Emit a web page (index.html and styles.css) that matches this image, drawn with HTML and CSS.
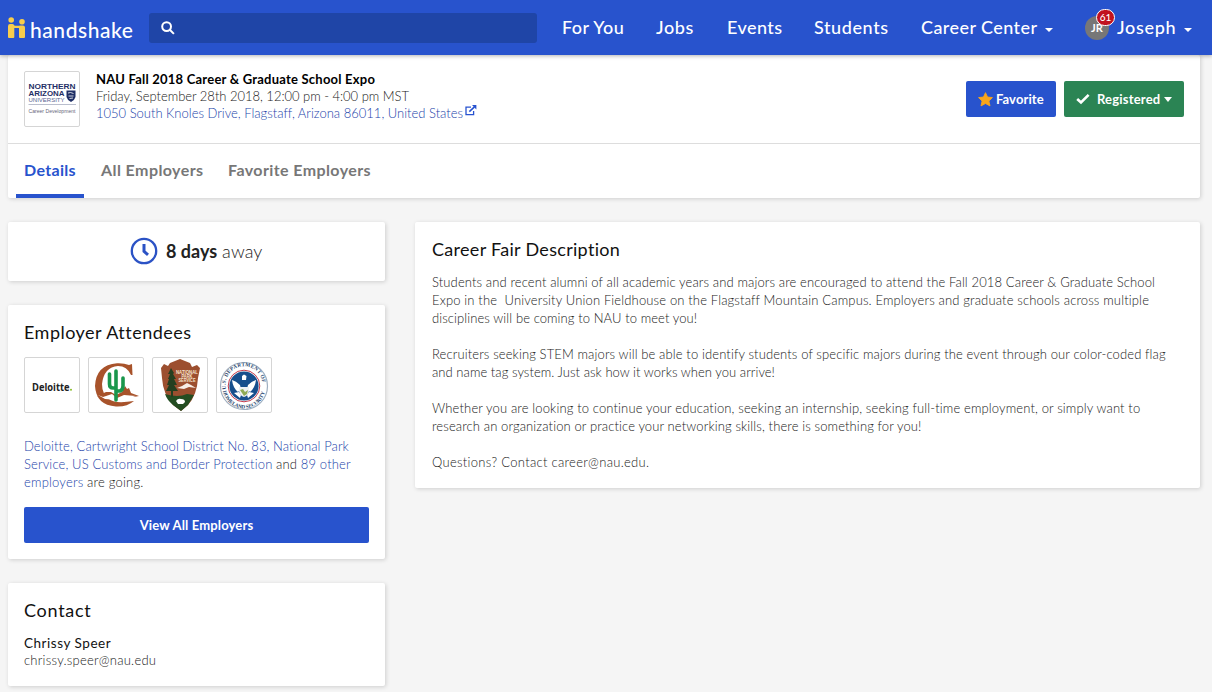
FILE: index.html
```html
<!DOCTYPE html>
<html lang="en">
<head>
<meta charset="utf-8">
<title>NAU Fall 2018 Career &amp; Graduate School Expo</title>
<link rel="stylesheet" href="styles.css">
</head>
<body>
<header class="topbar">
  <div class="brand">
    <svg class="brand-mark" width="18" height="22" viewBox="0 0 18 22" fill="#f8cd4c">
      <circle cx="3.2" cy="3" r="2.8"/><circle cx="14" cy="4.8" r="2.8"/>
      <path d="M0 9.2Q0 7 2 7H4.5Q6 7 6.6 8.8H10.8Q11.5 8.6 12.5 8.6H15Q17 8.6 17 10.6V20Q17 21 16 21H12Q11 21 11 20V11H6.3V20Q6.3 21 5.3 21H1Q0 21 0 20Z"/>
    </svg>
    <span class="brand-name">handshake</span>
  </div>
  <div class="search">
    <svg width="14" height="14" viewBox="0 0 14 14" fill="none" stroke="#fff" stroke-width="2"><circle cx="5.6" cy="5.6" r="4.4"/><path d="M8.8 8.8L12.9 12.9"/></svg>
  </div>
  <nav class="nav">
    <a class="nav-you">For You</a>
    <a class="nav-jobs">Jobs</a>
    <a class="nav-events">Events</a>
    <a class="nav-students">Students</a>
    <a class="nav-center">Career Center</a><i class="caret"></i>
    <span class="avatar"><span class="initials">JR</span><span class="badge">61</span></span>
    <a class="nav-user">Joseph</a><i class="caret"></i>
  </nav>
</header>
<main class="page">
  <section class="card event">
    <div class="event-info">
      <div class="thumb">
        <svg width="54" height="54" viewBox="0 0 54 54" font-family="Liberation Sans, sans-serif" fill="#1f2f66">
          <text x="3.5" y="17" font-size="6.3" font-weight="700" textLength="47" lengthAdjust="spacingAndGlyphs">NORTHERN</text>
          <text x="3.5" y="24" font-size="6.3" font-weight="700" textLength="36" lengthAdjust="spacingAndGlyphs">ARIZONA</text>
          <text x="3.5" y="30" font-size="5.2" textLength="36" lengthAdjust="spacingAndGlyphs" fill="#5a6690">UNIVERSITY</text>
          <path d="M41.500 18.500H50.500V25Q49.500 28.500 46 30Q42.500 28.500 41.500 25Z"/>
          <path d="M43 21L45.500 20.500 48.500 21.500M43.500 24H48.500M44.500 26.500L48 26" stroke="#fff" stroke-width=".8"/>
          <path d="M3.5 32.500H51" stroke="#a7adc0" stroke-width=".8"/>
          <text x="3.5" y="40.500" font-size="5" textLength="47" lengthAdjust="spacingAndGlyphs" fill="#66677c">Career Development</text>
        </svg>
      </div>
      <div class="event-text">
        <div class="event-title">NAU Fall 2018 Career &amp; Graduate School Expo</div>
        <div class="event-date">Friday, September 28th 2018, 12:00 pm - 4:00 pm MST</div>
        <div class="event-place"><a>1050 South Knoles Drive, Flagstaff, Arizona 86011, United States</a><svg class="ext" width="12" height="11" viewBox="0 0 12 11" fill="none" stroke="#2853d0" stroke-width="1.3"><path d="M6 2.2H1V9.6H8.6V6"/><path d="M4.3 6.6L9.5 1.9" stroke-width="1.6"/><path d="M7 0H11.4V4.4Z" fill="#2853d0" stroke="none"/></svg></div>
      </div>
      <button class="btn btn-favorite"><svg width="15" height="15" viewBox="0 0 14 14" fill="#f9a51a" stroke="#f9a51a" stroke-width=".8" stroke-linejoin="round"><path d="M7 .6L8.9 4.7 13.5 5.2 10.2 8.4 11.2 13 7 10.7 2.8 13 3.8 8.4 .5 5.2 5.1 4.7Z"/></svg><span>Favorite</span></button>
      <button class="btn btn-registered"><svg width="14" height="12" viewBox="0 0 14 12" fill="none" stroke="#fff" stroke-width="2.6"><path d="M1.2 6L5 9.5 12.6 1.9"/></svg><span>Registered</span><i class="caret big"></i></button>
    </div>
    <nav class="tabs">
      <a class="tab active"><span class="t1">Details</span></a>
      <a class="tab"><span class="t2">All Employers</span></a>
      <a class="tab"><span class="t3">Favorite Employers</span></a>
    </nav>
  </section>
  <div class="columns">
    <div class="side">
      <section class="card countdown">
        <svg width="28" height="28" viewBox="0 0 28 28" fill="none" stroke="#2b52c5"><circle cx="14" cy="14" r="12.2" stroke-width="2.3"/><path d="M14 7V14.300L18 17.800" stroke-width="3"/></svg>
        <span class="days"><b>8 days</b> away</span>
      </section>
      <section class="card employers">
        <h2 class="h-emp">Employer Attendees</h2>
        <div class="logos">
          <div class="thumb"><svg width="54" height="54" viewBox="0 0 54 54"><text x="7" y="32.5" font-family="Open Sans, sans-serif" font-weight="700" font-size="10.5" textLength="37.5" lengthAdjust="spacingAndGlyphs" fill="#222">Deloitte</text><circle cx="46" cy="31.8" r="1" fill="#86bc25"/></svg></div>
          <div class="thumb"><svg width="54" height="54" viewBox="0 0 54 54">
            <path d="M43 6L43.5 17H42Q38 8 29 8Q15 9 13 26Q13 36 20 41Q25 46 45 43Q38 49 27 48.5Q7 47 6 28Q7 7 28 5.3Q35 5 40 7Z" fill="#a8532b"/>
            <path d="M8 38L17 34 22 34 27 37 33 34 36 28 38 31 40 30 42 35 50 38 45 39 34 39 27 42 20 39 13 41Z" fill="#a8532b"/>
            <path d="M9 37L14 39 23 36 28 40 35 37 47 38 38 41 28 42 16 41Z" fill="#fff"/>
            <path d="M27 42V13M27 30H24Q20.5 30 20.5 26V16M27 33H31Q34 32 34 28V20" fill="none" stroke="#19964c" stroke-width="3.6" stroke-linecap="round"/>
          </svg></div>
          <div class="thumb"><svg width="54" height="54" viewBox="0 0 54 54">
            <path d="M17 5L27 1 37 5 39 9 44 7 47 10 45 20Q44 37 35 47L28 53 20 47Q10 36 9 20L8 10 11 6 15 8Z" fill="#9c4f2f"/>
            <path d="M12 36Q25 40 34 36L41 37 35 47 28 53 20 47Q14 42 12 36Z" fill="#244d22"/>
            <path d="M18 10L21 15 20 16 23 21 21 21 24 27 21 27 25 33 20 33V39H18V33H13L16 27H14L16 21H15L17 16H15Z" fill="#243f20"/>
            <path d="M24 30L29 28 34 25 38 27 43 30 36 29 31 31Z" fill="#f7eee5"/>
            <path d="M23 43Q25 40 28 41Q32 41 32 44L30 46H25Z" fill="#fff"/>
            <g fill="#f7e5cf" font-family="Liberation Sans, sans-serif" font-weight="700" font-size="4.6"><text x="23" y="15.5" textLength="22" lengthAdjust="spacingAndGlyphs">NATIONAL</text><text x="28.5" y="19.5" textLength="11" lengthAdjust="spacingAndGlyphs">PARK</text><text x="25.5" y="23.5" textLength="17" lengthAdjust="spacingAndGlyphs">SERVICE</text></g>
          </svg></div>
          <div class="thumb"><svg width="54" height="54" viewBox="0 0 54 54">
            <circle cx="27" cy="28" r="23.5" fill="#fff" stroke="#9eaec0" stroke-width="1.2"/>
            <circle cx="27" cy="28" r="15.8" fill="#fff" stroke="#c33b4c" stroke-width="1"/>
            <circle cx="27" cy="28" r="14.6" fill="#174f8d"/>
            <path d="M15 22Q19 23 23 27L24 31 21 34Q16 30 15 22ZM39 22Q35 23 31 27L30 31 33 34Q38 30 39 22ZM25 18L27 16.5 29.5 18 29 22H25Z" fill="#fff"/>
            <path d="M17 35L22 34 24 37 23 40ZM37 35L32 34 30 37 31 40Z" fill="#fff"/>
            <path d="M22 29H32V33Q31 38 27 39Q23 38 22 33Z" fill="#eef2f5"/><path d="M23 32L26 31 28 34 31 32 30 36 27 38Z" fill="#8fab55"/>
            <path id="arcTop" d="M9 31A18.5 18.5 0 1 1 45 31" fill="none"/>
            <path id="arcBottom" d="M5.5 29A21.5 21.5 0 0 0 48.5 29" fill="none"/>
            <g fill="#28466e" font-family="Liberation Serif, serif" font-weight="700" font-size="5.3"><text><textPath href="#arcTop" textLength="60">U.S. DEPARTMENT OF</textPath></text><text><textPath href="#arcBottom" startOffset="4" textLength="58">HOMELAND SECURITY</textPath></text></g>
          </svg></div>
        </div>
        <div class="going"><div class="g1"><a>Deloitte, Cartwright School District No. 83, National Park</a></div><div class="g2"><a>Service, US Customs and Border Protection</a> and <a>89 other</a></div><div class="g3"><a>employers</a> are going.</div></div>
        <button class="btn btn-view"><span>View All Employers</span></button>
      </section>
      <section class="card contact">
        <h2 class="h-contact">Contact</h2>
        <div class="person">Chrissy Speer</div>
        <div class="email">chrissy.speer@nau.edu</div>
      </section>
    </div>
    <section class="card description">
      <h2 class="h-desc">Career Fair Description</h2>
      <p><span class="d1">Students and recent alumni of all academic years and majors are encouraged to attend the Fall 2018 Career &amp; Graduate School</span><br><span class="d2">Expo in the&nbsp; University Union Fieldhouse on the Flagstaff Mountain Campus. Employers and graduate schools across multiple</span><br><span class="d3">disciplines will be coming to NAU to meet you!</span></p>
      <p><span class="d4">Recruiters seeking STEM majors will be able to identify students of specific majors during the event through our color-coded flag</span><br><span class="d5">and name tag system. Just ask how it works when you arrive!</span></p>
      <p><span class="d6">Whether you are looking to continue your education, seeking an internship, seeking full-time employment, or simply want to</span><br><span class="d7">research an organization or practice your networking skills, there is something for you!</span></p>
      <p><span class="d8">Questions? Contact career@nau.edu.</span></p>
    </section>
  </div>
</main>
</body>
</html>
```

FILE: styles.css
```css
* { box-sizing: border-box; }
body { margin: 0; height: 692px; overflow: hidden; background: #f5f5f5; color: #222; font: 300 13px/18px Lato, "Open Sans", sans-serif; font-variant-ligatures: none; white-space: nowrap; }
a { color: #2444aa; }
h2 { margin: 0; color: #111; font-size: 18px; font-weight: 400; line-height: 24px; }
.topbar { position: relative; z-index: 1; display: flex; align-items: center; height: 55px; padding-left: 8px; background: #2853cd; box-shadow: 0 1px 4px rgba(0,0,0,.3); }
.brand { display: flex; width: 141px; height: 22px; margin-top: 1px; }
.brand-name { margin-left: 4px; color: #fff; font: 500 21px/25px Lato, sans-serif; letter-spacing: .55px; }
.search { display: flex; align-items: center; width: 388px; height: 30px; padding-left: 12px; border-radius: 3px; background: #1f45a7; }
.nav { display: flex; align-items: center; height: 28px; margin-bottom: 1px; padding-left: 25px; }
.nav a { color: #fff; font-size: 18px; font-weight: 500; line-height: 24px; }
.nav-you { width: 94px; letter-spacing: .4px; }
.nav-jobs { width: 71px; letter-spacing: .6px; }
.nav-events { width: 87px; letter-spacing: .45px; }
.nav-students { width: 107px; letter-spacing: .6px; }
.nav-center { width: 124px; letter-spacing: .42px; }
.nav-user { width: 67px; letter-spacing: .7px; }
.caret { width: 0; height: 0; margin-top: 5px; border: 4px solid transparent; border-top-color: #fff; border-bottom: 0; }
.avatar { position: relative; width: 24px; height: 24px; margin: 1px 8px 0 32px; border-radius: 50%; background: #777; color: #fff; text-align: center; }
.initials { font-size: 11px; font-weight: 700; line-height: 24px; }
.badge { position: absolute; left: 11px; top: -7px; width: 19px; height: 17px; border: 1px solid #fff; border-radius: 9px; background: #c1121f; font-size: 10px; font-weight: 500; line-height: 15px; }
.page { width: 1200px; padding-left: 8px; }
.card { border-radius: 2px; background: #fff; box-shadow: 1px 1px 4px rgba(0,0,0,.16); }
.event { height: 143px; }
.event-info { display: flex; height: 89px; padding: 16px 16px 0; border-bottom: 1px solid #ddd; }
.thumb { width: 56px; height: 56px; border: 1px solid #d5d5d5; border-radius: 2px; }
.thumb svg { display: block; }
.event-text { flex: 1; margin-left: 16px; color: #222; line-height: 17px; }
.event-title { color: #000; font-weight: 700; letter-spacing: .22px; }
.event-date { letter-spacing: -.02px; }
.event-place { display: flex; }
.ext { margin: 0 0 0 2px; }
.btn { display: flex; align-items: center; height: 36px; padding: 0; border: 0; border-radius: 2px; background: #2853cd; color: #fff; font: 700 13px Lato, sans-serif; }
.btn-favorite { width: 90px; margin: 10px 8px 0 0; padding-left: 12px; }
.btn-favorite span { margin-left: 3px; letter-spacing: .1px; }
.btn-registered { width: 120px; margin-top: 10px; padding-left: 12px; background: #2b8454; }
.btn-registered span { width: 67px; margin-left: 7px; text-align: left; letter-spacing: .2px; }
.caret.big { margin: 0; border-width: 5px 4px 0; }
.tabs { display: flex; height: 54px; padding-left: 8px; }
.tab { height: 54px; margin-right: 8px; padding: 0 8px; color: #777; font-size: 16px; font-weight: 700; line-height: 52px; }
.tab span { display: block; }
.tab.active { border-bottom: 4px solid #2853cd; color: #2853cd; }
.t1 { width: 52px; letter-spacing: .33px; }
.t2 { width: 103px; letter-spacing: .42px; }
.t3 { width: 144px; letter-spacing: .4px; }
.tab:nth-child(2) { padding-left: 9px; }
.columns { display: flex; align-items: flex-start; gap: 30px; padding-top: 24px; }
.side { display: flex; flex-direction: column; gap: 24px; width: 377px; }
.countdown { display: flex; align-items: center; height: 59px; padding: 0 0 1px 122px; }
.days { margin-left: 8px; font-size: 18px; line-height: 20px; letter-spacing: .1px; }
.days b { font-weight: 700; letter-spacing: 0; }
.employers { height: 254px; padding: 16px 16px 0; }
.h-emp { line-height: 23px; letter-spacing: .48px; }
.logos { display: flex; gap: 8px; margin: 13px 0 24px; }
.g1 { letter-spacing: .09px; }
.g2 { letter-spacing: .14px; }
.g3 { letter-spacing: .2px; }
.btn-view { justify-content: center; width: 345px; margin-top: 16px; padding-bottom: 1px; letter-spacing: .15px; }
.contact { height: 103px; padding: 16px 16px 0; }
.h-contact { line-height: 23px; letter-spacing: .72px; }
.person { margin-top: 13px; color: #111; font-size: 13.5px; font-weight: 400; line-height: 17px; letter-spacing: .53px; }
.email { line-height: 17px; letter-spacing: .24px; }
.description { width: 785px; height: 266px; padding: 16px 17px 0; }
.description p { margin: 0 0 18px; }
.h-desc { margin-bottom: 12px; line-height: 23px; letter-spacing: .3px; }
.d1 { letter-spacing: .12px; }
.d2 { letter-spacing: .148px; }
.d3 { letter-spacing: .09px; }
.d4 { letter-spacing: .12px; }
.d5 { letter-spacing: .05px; }
.d6 { letter-spacing: .135px; }
.d7 { letter-spacing: .12px; }
.d8 { letter-spacing: .3px; }
```
